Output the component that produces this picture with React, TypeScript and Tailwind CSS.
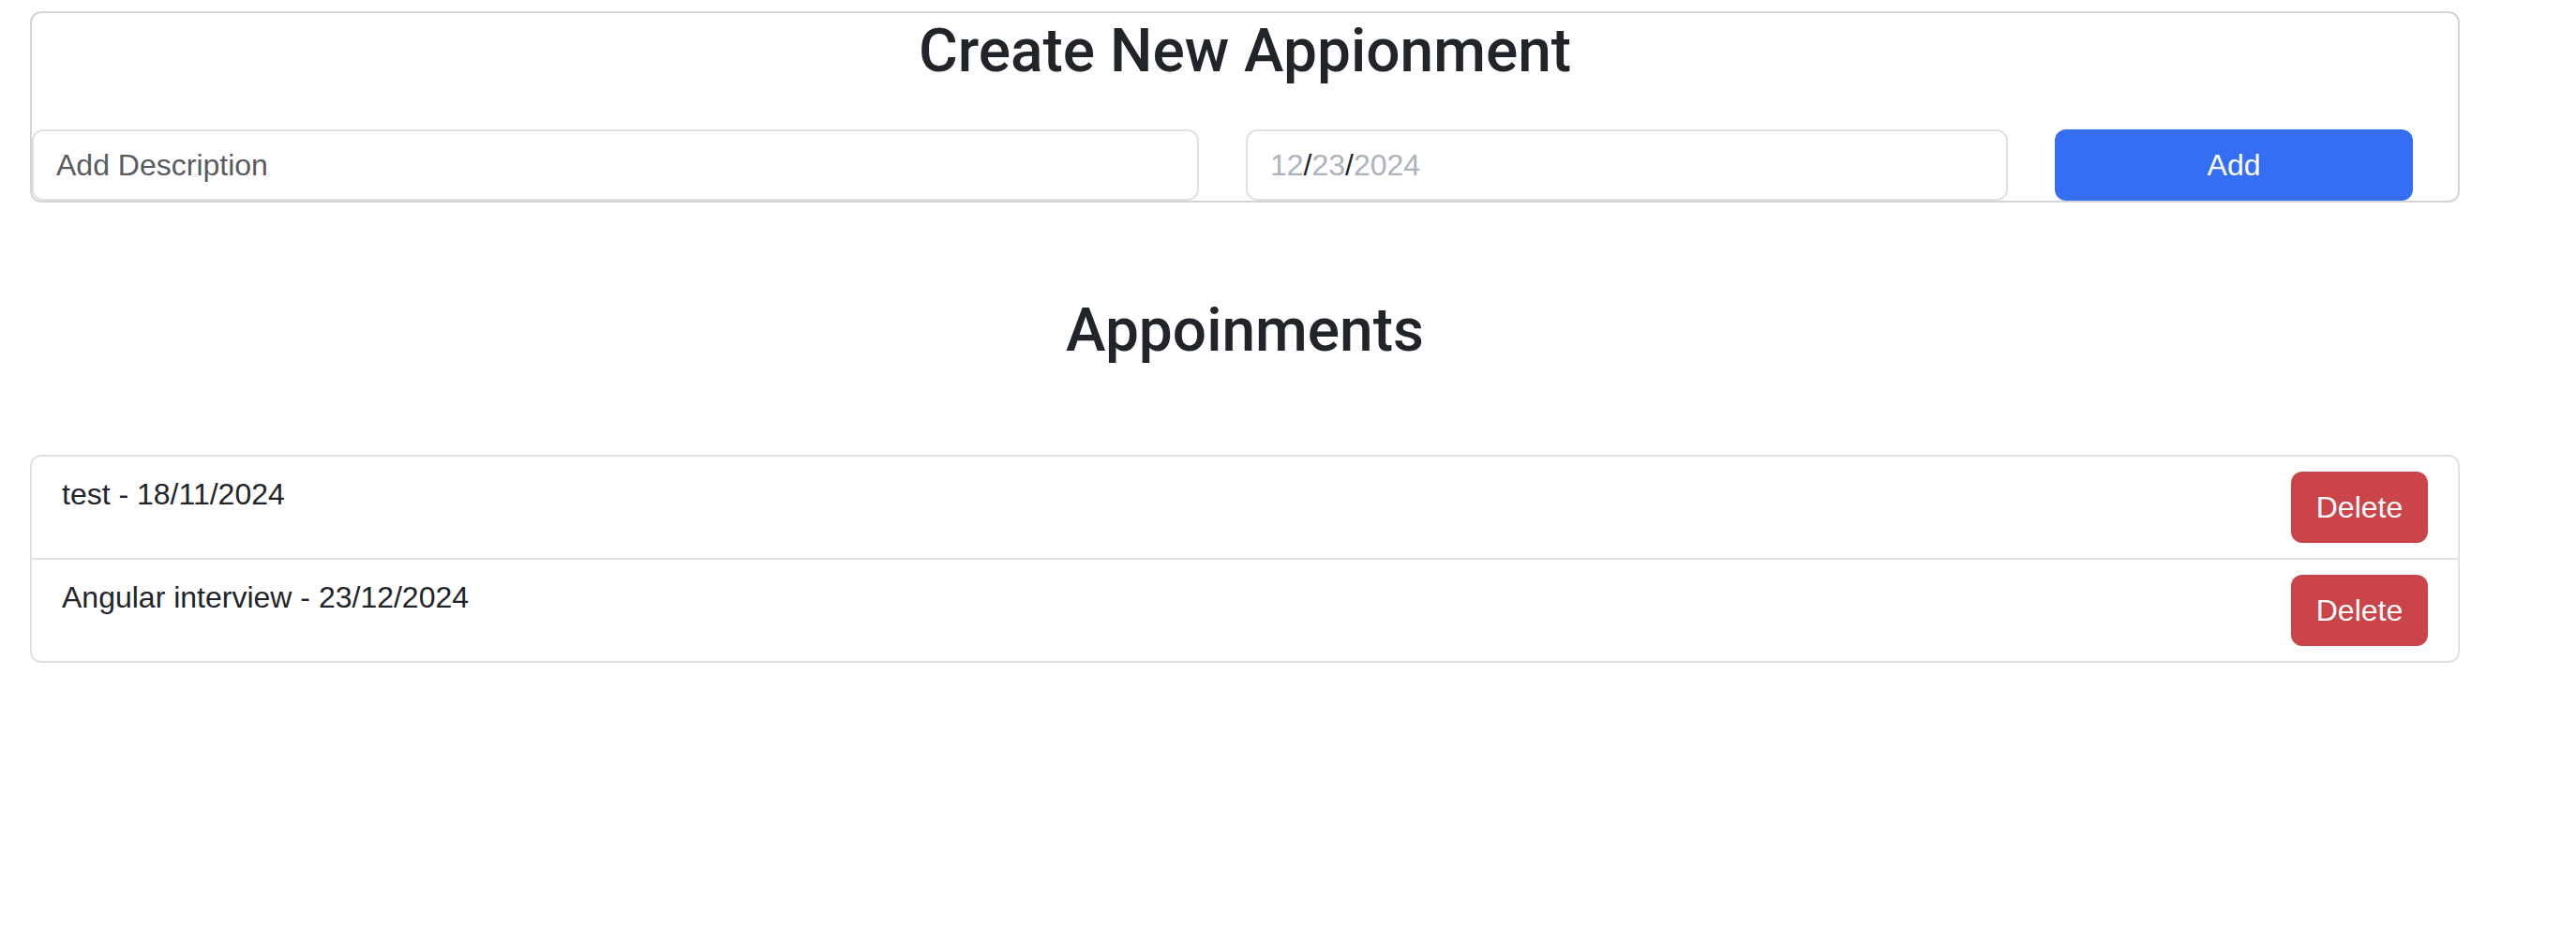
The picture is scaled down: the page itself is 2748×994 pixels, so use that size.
const appointments = [
  { id: 1, description: 'test', date: '18/11/2024' },
  { id: 2, description: 'Angular interview', date: '23/12/2024' },
];

export default function App() {
  return (
    <div className="min-h-screen bg-white font-['Liberation_Sans',Arial,sans-serif] text-[#212529]">
      <div className="ml-[32px] w-[2592px] pt-[12px]">
        {/* create form */}
        <div className="rounded-[12px] border-2 border-[#d4d4d4]">
          <h2 className="pt-[2px] text-center font-['Roboto',Arial,sans-serif] text-[64px] leading-[77px] font-medium">
            Create New Appionment
          </h2>
          <div className="mt-[45px] flex gap-[50px]">
            <input
              type="text"
              placeholder="Add Description"
              className="h-[76px] w-[1245px] rounded-[12px] border-2 border-[#dee2e6] bg-white px-[24px] text-[32px] text-[#212529] outline-none placeholder:text-[#595c5f]"
            />
            <div className="flex h-[76px] w-[813px] items-center rounded-[12px] border-2 border-[#dee2e6] bg-white px-[24px] text-[32px]">
              <span className="text-[#adb3bb]">12</span>
              <span className="text-[#212529]">/</span>
              <span className="text-[#adb3bb]">23</span>
              <span className="text-[#212529]">/</span>
              <span className="text-[#adb3bb]">2024</span>
            </div>
            <button className="h-[76px] w-[382px] rounded-[12px] bg-[#346ff3] text-[32px] text-white">Add</button>
          </div>
        </div>

        <h2 className="mt-[98px] text-center font-['Roboto',Arial,sans-serif] text-[64px] leading-[77px] font-medium">
          Appoinments
        </h2>

        {/* list */}
        <ul className="mt-[94px] rounded-[12px] border-2 border-[#dee2e6]">
          {appointments.map((a, i) => (
            <li
              key={a.id}
              className={
                'flex items-start justify-between px-[32px] py-[16px] ' +
                (i > 0 ? 'border-t-2 border-[#dee2e6]' : '')
              }
            >
              <span className="text-[32px] leading-[48px]">
                {a.description} - {a.date}
              </span>
              <button className="h-[76px] w-[146px] rounded-[12px] bg-[#cb444a] text-[32px] text-white">Delete</button>
            </li>
          ))}
        </ul>
      </div>
    </div>
  );
}
